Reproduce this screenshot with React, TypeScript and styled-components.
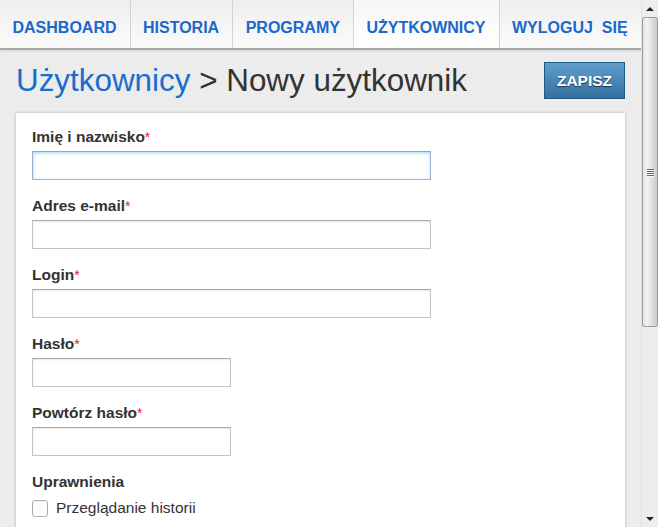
import React from "react";
import styled, { createGlobalStyle } from "styled-components";

const GlobalStyle = createGlobalStyle`
  html, body { margin: 0; padding: 0; height: 100%; overflow: hidden; }
  body { font-family: "Liberation Sans", Arial, sans-serif; background: #ececec; color: #333; }
  #root { height: 100%; }
`;

const Frame = styled.div`
  display: flex;
  height: 527px;
  overflow: hidden;
`;

const Main = styled.div`
  flex: 1;
  min-width: 0;
  display: flex;
  flex-direction: column;
  overflow: hidden;
`;

const Nav = styled.nav`
  display: flex;
  height: 48px;
  flex-shrink: 0;
  background: linear-gradient(to bottom, #eeeeee, #fbfbfb);
  border-bottom: 2px solid #a9a9a9;
  box-shadow: 0 1px 2px rgba(0, 0, 0, 0.12);
`;

const Tab = styled.a<{ $active?: boolean; $last?: boolean }>`
  display: flex;
  align-items: center;
  box-sizing: border-box;
  height: 48px;
  padding: 7px 13px 0 12.5px;
  border-right: ${(p) => (p.$last ? "none" : "1px solid #d2d2d2")};
  background: ${(p) => (p.$active ? "linear-gradient(to bottom, #f6f6f6, #ffffff)" : "transparent")};
  color: #1a68cc;
  font-weight: bold;
  font-size: 16px;
  line-height: 18px;
  text-decoration: none;
  white-space: pre;
`;

const Header = styled.div`
  display: flex;
  align-items: center;
  justify-content: space-between;
  padding: 12px 16px 14px;
  flex-shrink: 0;
`;

const Title = styled.h1`
  margin: 0;
  font-size: 31.4px;
  font-weight: normal;
  line-height: 36px;
  color: #333;
`;

const Crumb = styled.a`
  color: #1a6ccf;
  text-decoration: none;
`;

const SaveButton = styled.button`
  width: 81px;
  height: 37px;
  border: 1px solid #1d5a84;
  background: linear-gradient(to bottom, #5f9fcd, #346fa0);
  color: #fff;
  font-family: "Liberation Sans", Arial, sans-serif;
  font-weight: bold;
  font-size: 15.5px;
  text-shadow: 0 1px 1px rgba(0, 0, 0, 0.6);
  padding: 0;
  cursor: pointer;
`;

const Card = styled.div`
  flex: 1;
  margin: 0 16px;
  background: #fff;
  box-shadow: 0 0 3px rgba(0, 0, 0, 0.25);
  padding: 15px 16px 0;
`;

const Field = styled.div`
  display: flex;
  flex-direction: column;
  margin-bottom: 17px;
`;

const Label = styled.label`
  font-weight: bold;
  font-size: 15.5px;
  line-height: 18px;
  color: #333;
  margin-bottom: 5px;
`;

const Req = styled.span`
  color: #e82020;
  font-size: 14px;
  font-weight: normal;
`;

const Input = styled.input<{ $width: number; $focused?: boolean }>`
  box-sizing: border-box;
  width: ${(p) => p.$width}px;
  height: 29px;
  margin: 0;
  border: 1px solid ${(p) => (p.$focused ? "#96b3d6" : "#c4c4c4")};
  border-top-color: ${(p) => (p.$focused ? "#88a6cc" : "#a9a9a9")};
  box-shadow: ${(p) =>
    p.$focused
      ? "inset 0 2px 3px rgba(140, 205, 235, 0.55), inset 1px 0 2px rgba(140, 205, 235, 0.35)"
      : "inset 0 1px 2px rgba(0, 0, 0, 0.1)"};
  background: #fff;
  outline: none;
  font-size: 15px;
`;

const CheckRow = styled.label`
  display: flex;
  align-items: center;
  gap: 8px;
  font-size: 15.5px;
  line-height: 20px;
  color: #333;
  margin-top: 2px;
`;

const Box = styled.span`
  box-sizing: border-box;
  width: 16px;
  height: 17px;
  border: 1px solid #ababab;
  border-radius: 3px;
  background: linear-gradient(to bottom, #fafafa, #ffffff);
`;

const Scrollbar = styled.div`
  width: 17px;
  flex-shrink: 0;
  display: flex;
  flex-direction: column;
  background: #ededed;
  border-left: 1px solid #e2e2e2;
  box-sizing: border-box;
`;

const Arrow = styled.div<{ $down?: boolean }>`
  height: 17px;
  display: flex;
  align-items: center;
  justify-content: center;
  &::after {
    content: "";
    width: 0;
    height: 0;
    border-left: 4px solid transparent;
    border-right: 4px solid transparent;
    ${(p) => (p.$down ? "border-top: 4px solid #222;" : "border-bottom: 4px solid #222;")}
  }
`;

const Thumb = styled.div`
  height: 310px;
  box-sizing: border-box;
  border: 1px solid #9c9c9c;
  border-radius: 2px;
  background: linear-gradient(to right, #e4e4e4, #f2f2f2 30%, #d6d6d6 80%, #c8c8c8);
  display: flex;
  flex-direction: column;
  align-items: center;
  justify-content: center;
  gap: 1px;
`;

const Grip = styled.span`
  width: 7px;
  height: 1px;
  background: #6a6a6a;
  box-shadow: 0 1px 0 #fafafa;
`;

const Track = styled.div`
  flex: 1;
`;

export default function App() {
  return (
    <>
      <GlobalStyle />
      <Frame>
        <Main>
          <Nav>
            <Tab href="#">DASHBOARD</Tab>
            <Tab href="#">HISTORIA</Tab>
            <Tab href="#">PROGRAMY</Tab>
            <Tab href="#" $active>UŻYTKOWNICY</Tab>
            <Tab href="#" $last>{"WYLOGUJ  SIĘ"}</Tab>
          </Nav>
          <Header>
            <Title>
              <Crumb href="#">Użytkownicy</Crumb> &gt; Nowy użytkownik
            </Title>
            <SaveButton>ZAPISZ</SaveButton>
          </Header>
          <Card>
            <Field>
              <Label>Imię i nazwisko<Req>*</Req></Label>
              <Input $width={399} $focused />
            </Field>
            <Field>
              <Label>Adres e-mail<Req>*</Req></Label>
              <Input $width={399} />
            </Field>
            <Field>
              <Label>Login<Req>*</Req></Label>
              <Input $width={399} />
            </Field>
            <Field>
              <Label>Hasło<Req>*</Req></Label>
              <Input $width={199} type="password" />
            </Field>
            <Field>
              <Label>Powtórz hasło<Req>*</Req></Label>
              <Input $width={199} type="password" />
            </Field>
            <Field>
              <Label>Uprawnienia</Label>
              <CheckRow>
                <Box />
                Przeglądanie historii
              </CheckRow>
            </Field>
          </Card>
        </Main>
        <Scrollbar>
          <Arrow />
          <Thumb>
            <Grip />
            <Grip />
            <Grip />
            <Grip />
          </Thumb>
          <Track />
          <Arrow $down />
        </Scrollbar>
      </Frame>
    </>
  );
}
